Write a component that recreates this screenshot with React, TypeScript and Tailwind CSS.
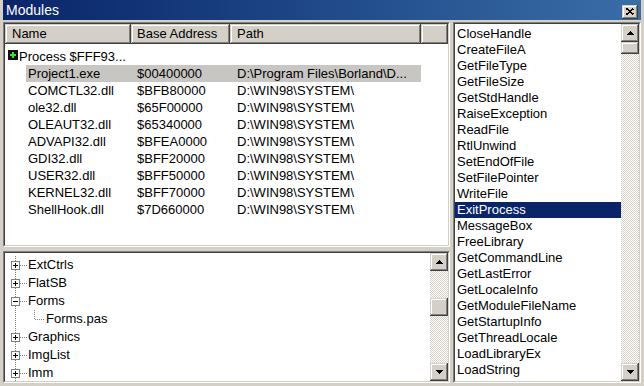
import React from 'react';

const modules = [
  { name: 'Project1.exe', base: '$00400000', path: 'D:\\Program Files\\Borland\\D...', selected: true },
  { name: 'COMCTL32.dll', base: '$BFB80000', path: 'D:\\WIN98\\SYSTEM\\' },
  { name: 'ole32.dll', base: '$65F00000', path: 'D:\\WIN98\\SYSTEM\\' },
  { name: 'OLEAUT32.dll', base: '$65340000', path: 'D:\\WIN98\\SYSTEM\\' },
  { name: 'ADVAPI32.dll', base: '$BFEA0000', path: 'D:\\WIN98\\SYSTEM\\' },
  { name: 'GDI32.dll', base: '$BFF20000', path: 'D:\\WIN98\\SYSTEM\\' },
  { name: 'USER32.dll', base: '$BFF50000', path: 'D:\\WIN98\\SYSTEM\\' },
  { name: 'KERNEL32.dll', base: '$BFF70000', path: 'D:\\WIN98\\SYSTEM\\' },
  { name: 'ShellHook.dll', base: '$7D660000', path: 'D:\\WIN98\\SYSTEM\\' },
];

const imports = [
  'CloseHandle', 'CreateFileA', 'GetFileType', 'GetFileSize', 'GetStdHandle', 'RaiseException',
  'ReadFile', 'RtlUnwind', 'SetEndOfFile', 'SetFilePointer', 'WriteFile', 'ExitProcess',
  'MessageBox', 'FreeLibrary', 'GetCommandLine', 'GetLastError', 'GetLocaleInfo',
  'GetModuleFileName', 'GetStartupInfo', 'GetThreadLocale', 'LoadLibraryEx', 'LoadString',
];

const units = [
  { name: 'ExtCtrls' },
  { name: 'FlatSB' },
  { name: 'Forms', open: true },
  { name: 'Forms.pas', child: true },
  { name: 'Graphics' },
  { name: 'ImgList' },
  { name: 'Imm' },
];

const raised =
  'bg-[#d4d0c8] shadow-[inset_-1px_-1px_0_#404040,inset_1px_1px_0_#d4d0c8,inset_-2px_-2px_0_#808080,inset_2px_2px_0_#ffffff]';

function Sunken({ className = '', children }: { className?: string; children: React.ReactNode }) {
  return (
    <div className={`border border-t-[#808080] border-l-[#808080] border-b-white border-r-white ${className}`}>
      <div className="flex h-full w-full border border-t-[#404040] border-l-[#404040] border-b-[#d4d0c8] border-r-[#d4d0c8] bg-white">
        {children}
      </div>
    </div>
  );
}

function Arrow({ down }: { down?: boolean }) {
  return (
    <svg width="7" height="4" viewBox="0 0 7 4" shapeRendering="crispEdges" className={down ? 'rotate-180' : ''}>
      <rect x="3" y="0" width="1" height="1" fill="#000" />
      <rect x="2" y="1" width="3" height="1" fill="#000" />
      <rect x="1" y="2" width="5" height="1" fill="#000" />
      <rect x="0" y="3" width="7" height="1" fill="#000" />
    </svg>
  );
}

function ScrollBar({ offset, thumb }: { offset: number; thumb: number }) {
  return (
    <div className="flex w-[18px] flex-col">
      <div className={`flex h-[18px] items-center justify-center ${raised}`}>
        <Arrow />
      </div>
      <div className="flex flex-1 flex-col bg-[repeating-conic-gradient(#d4d0c8_0%_25%,#ffffff_0%_50%)] bg-size-[2px_2px]">
        <div style={{ height: offset }} />
        <div className={raised} style={{ height: thumb }} />
      </div>
      <div className={`flex h-[18px] items-center justify-center ${raised}`}>
        <Arrow down />
      </div>
    </div>
  );
}

function TreeLines({ open, child }: { open?: boolean; child?: boolean }) {
  return (
    <svg width={child ? 38 : 20} height="18" shapeRendering="crispEdges" className="shrink-0">
      <line x1="8.5" y1="0" x2="8.5" y2="18" stroke="#808080" strokeDasharray="1 1" />
      {child ? (
        <>
          <line x1="27.5" y1="0" x2="27.5" y2="9" stroke="#808080" strokeDasharray="1 1" />
          <line x1="28" y1="9.5" x2="37" y2="9.5" stroke="#808080" strokeDasharray="1 1" />
        </>
      ) : (
        <>
          <line x1="13" y1="9.5" x2="20" y2="9.5" stroke="#808080" strokeDasharray="1 1" />
          <rect x="4.5" y="5.5" width="8" height="8" fill="#fff" stroke="#808080" />
          <line x1="6" y1="9.5" x2="11" y2="9.5" stroke="#000" />
          {!open && <line x1="8.5" y1="7" x2="8.5" y2="12" stroke="#000" />}
        </>
      )}
    </svg>
  );
}

export default function App() {
  return (
    <div className="flex h-[386px] w-[644px] flex-col overflow-hidden bg-[#d4d0c8] px-[3px] pb-[3px] font-['Liberation_Sans',Arial,sans-serif] text-[13px] text-black">
      <div className="flex h-[20px] shrink-0 items-center justify-between bg-linear-to-r from-[#0a246a] to-[#3a6ea8] pl-[3px] pr-[3px]">
        <span className="text-[14px] text-white">Modules</span>
        <div className={`mt-[3px] flex h-[14px] w-[16px] items-center justify-center ${raised}`}>
          <svg width="8" height="7" viewBox="0 0 8 7" shapeRendering="crispEdges">
            <path d="M0.5 0.5 L7.5 6.5 M7.5 0.5 L0.5 6.5" stroke="#000" strokeWidth="1.6" />
          </svg>
        </div>
      </div>

      <div className="mt-[2px] flex min-h-0 flex-1 gap-[3px]">
        <div className="flex w-[447px] flex-col">
          <Sunken className="h-[225px] shrink-0">
            <div className="flex w-full flex-col">
              <div className="flex h-[20px] shrink-0">
                <div className={`flex w-[126px] items-center pl-[7px] ${raised}`}>Name</div>
                <div className={`flex w-[99px] items-center pl-[6px] ${raised}`}>Base Address</div>
                <div className={`flex w-[191px] items-center pl-[7px] ${raised}`}>Path</div>
                <div className={`flex-1 ${raised}`} />
              </div>
              <div className="flex flex-col pt-[4px]">
                <div className="flex h-[17px] items-center pl-[3px]">
                  <svg width="10" height="10" shapeRendering="crispEdges" className="mb-[4px] mr-[1px]">
                    <rect x="0" y="0" width="10" height="10" fill="#101010" />
                    <rect x="4" y="2" width="2" height="6" fill="#2ee82e" />
                    <rect x="2" y="4" width="6" height="2" fill="#2ee82e" />
                  </svg>
                  <span>Process $FFF93...</span>
                </div>
                {modules.map((m) => (
                  <div
                    key={m.name}
                    className={`ml-[21px] flex h-[17px] w-[395px] items-center ${m.selected ? 'bg-[#c8c6c2]' : ''}`}
                  >
                    <span className="w-[105px] pl-[2px]">{m.name}</span>
                    <span className="w-[99px] pl-[6px]">{m.base}</span>
                    <span className="pl-[7px]">{m.path}</span>
                  </div>
                ))}
              </div>
            </div>
          </Sunken>

          <div className="h-[4px] shrink-0" />

          <Sunken className="min-h-0 flex-1">
            <div className="flex flex-1 flex-col pl-[2px] pt-[3px]">
              {units.map((u) => (
                <div key={u.name} className="flex h-[18px] items-center">
                  <TreeLines open={u.open} child={u.child} />
                  <span className="pl-[1px]">{u.name}</span>
                </div>
              ))}
            </div>
            <ScrollBar offset={27} thumb={18} />
          </Sunken>
        </div>

        <Sunken className="flex-1">
          <div className="flex flex-1 flex-col pt-[2px]">
            {imports.map((name) => (
              <div
                key={name}
                className={`flex h-[16px] items-center pl-[2px] ${name === 'ExitProcess' ? 'bg-[#0a246a] text-white' : ''}`}
              >
                {name}
              </div>
            ))}
          </div>
          <ScrollBar offset={0} thumb={12} />
        </Sunken>
      </div>
    </div>
  );
}
